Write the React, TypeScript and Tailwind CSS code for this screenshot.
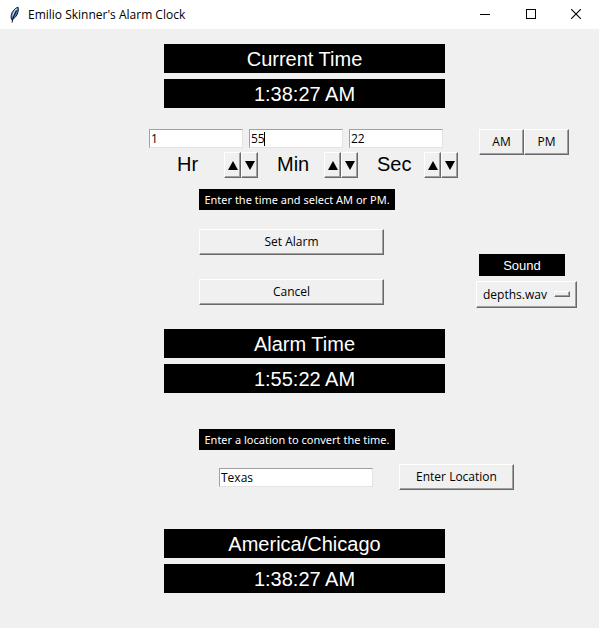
import { useState, type ReactNode } from "react";

const raised =
  "border border-t-white border-l-white border-b-[#696969] border-r-[#696969] shadow-[inset_-1px_-1px_0_#a0a0a0] bg-[#f0f0f0] active:bg-[#e4e4e4]";
const sunken =
  "border border-t-[#a0a0a0] border-l-[#a0a0a0] border-b-[#e3e3e3] border-r-[#e3e3e3] bg-white h-[19px] px-px text-[12px] leading-4 text-black outline-none";

function Feather() {
  return (
    <svg width="16" height="18" viewBox="0 0 16 18" aria-hidden="true">
      <path d="M11 1.200C8 2 4.800 5.600 4.200 9.400c-.2 1.800-.1 3 .5 4.300 2.900-1.200 5.200-3.900 6-6.700.7-2.200 1-4.400.3-5.800z" fill="#4b7db5" stroke="#14202e" strokeWidth="1" />
      <path d="M9.800 2.800C7.800 4.500 6.200 7.300 5.700 10.500" fill="none" stroke="#b9d6f2" strokeWidth="1.200" />
      <path d="M9.500 4.500C7.200 8.300 5.600 12 5 16.500" fill="none" stroke="#0b121b" strokeWidth="1.100" />
    </svg>
  );
}

function TitleBar() {
  return (
    <header className="flex h-[29px] items-center bg-white pl-[7px]">
      <div className="flex w-[21px]">
        <Feather />
      </div>
      <h1 className="flex-1 text-[12px] leading-4">Emilio Skinner's Alarm Clock</h1>
      <div className="flex h-[27px] self-start">
        <button aria-label="Minimize" className="flex w-[46px] items-center justify-center">
          <svg width="10" height="10" viewBox="0 0 10 10" shapeRendering="crispEdges">
            <path d="M0 5.500h10" stroke="#000" />
          </svg>
        </button>
        <button aria-label="Maximize" className="flex w-[45px] items-center justify-center">
          <svg width="10" height="10" viewBox="0 0 10 10" shapeRendering="crispEdges">
            <path d="M.5.5h9v9h-9z" stroke="#000" fill="none" />
          </svg>
        </button>
        <button aria-label="Close" className="flex w-[46px] items-center justify-center">
          <svg width="10" height="10" viewBox="0 0 10 10">
            <path d="M0 0l10 10M10 0L0 10" stroke="#000" strokeWidth="1.100" />
          </svg>
        </button>
      </div>
    </header>
  );
}

function Banner({ title, time }: { title: string; time: string }) {
  return (
    <section className="ml-[15px] flex w-[281px] flex-col gap-1.5 text-center font-['Liberation_Sans',Arial,sans-serif] text-[20px] leading-7 text-white">
      <h2 className="bg-black pt-px">{title}</h2>
      <p className="bg-black pt-px">{time}</p>
    </section>
  );
}

function Hint({ children }: { children: ReactNode }) {
  return (
    <p className="w-[196px] bg-black text-center font-['Noto_Sans',sans-serif] text-[11px] leading-[21px] whitespace-nowrap text-white">
      {children}
    </p>
  );
}

function Arrow({ down = false }: { down?: boolean }) {
  return (
    <svg width="10" height="9" viewBox="0 0 10 9" aria-hidden="true">
      <path d={down ? "M0 0h10L5 9z" : "M5 0l5 9H0z"} fill="#000" />
    </svg>
  );
}

const units = [
  { id: "hr", label: "Hr", initial: 1, limit: 13 },
  { id: "min", label: "Min", initial: 55, limit: 60 },
  { id: "sec", label: "Sec", initial: 22, limit: 60 },
];

function TimeFields() {
  const [values, setValues] = useState(units.map((u) => String(u.initial)));
  const update = (i: number, v: string) =>
    setValues((old) => old.map((o, n) => (n === i ? v : o)));
  const step = (i: number, by: number) => {
    const limit = units[i].limit;
    update(i, String((Number(values[i]) + by + limit) % limit));
  };

  return (
    <div className="w-[309px]">
      <div className="flex gap-1.5">
        {units.map((u, i) => (
          <div key={u.id} className="relative flex w-[94px]">
            <input
              id={u.id}
              className={`${sunken} w-full`}
              value={values[i]}
              onChange={(e) => update(i, e.target.value)}
            />
            {u.id === "min" && (
              <span className="pointer-events-none absolute top-[3px] left-[15px] h-[14px] w-px bg-black" />
            )}
          </div>
        ))}
      </div>
      <div className="mt-1 flex justify-between pl-7">
        {units.map((u, i) => (
          <div key={u.id} className="flex w-[81px] items-start justify-between">
            <label htmlFor={u.id} className="font-['Liberation_Sans',Arial,sans-serif] text-[20px] leading-6">
              {u.label}
            </label>
            <div className="flex">
              <button aria-label={`${u.label} up`} onClick={() => step(i, 1)} className={`${raised} flex h-[26px] w-[17px] items-center justify-center`}>
                <Arrow />
              </button>
              <button aria-label={`${u.label} down`} onClick={() => step(i, -1)} className={`${raised} flex h-[26px] w-[17px] items-center justify-center`}>
                <Arrow down />
              </button>
            </div>
          </div>
        ))}
      </div>
    </div>
  );
}

function SoundPicker() {
  return (
    <div className="mt-[25px] w-[101px]">
      <label
        htmlFor="sound"
        className="ml-[3px] block w-[86px] bg-black pt-px text-center font-['Liberation_Sans',Arial,sans-serif] text-[13px] leading-[21px] text-white"
      >
        Sound
      </label>
      <div className="relative mt-[5px]">
        <select id="sound" defaultValue="depths.wav" className={`${raised} block h-[27px] w-full appearance-none rounded-none pl-1.5 text-[12px] leading-4`}>
          <option>depths.wav</option>
        </select>
        <span className={`${raised} pointer-events-none absolute top-2.5 right-[7px] h-1.5 w-4`} />
      </div>
    </div>
  );
}

export default function App() {
  return (
    <div className="min-h-screen bg-[#f0f0f0] font-['Open_Sans','Noto_Sans',sans-serif] text-black">
      <TitleBar />
      <main className="pt-[15px] pr-[22px] pb-[35px] pl-[149px]">
        <Banner title="Current Time" time="1:38:27 AM" />

        <div className="mt-[21px] flex items-start justify-between pr-2">
          <TimeFields />
          <div className="flex text-[12px] leading-4">
            <button className={`${raised} h-[26px] w-[45px]`}>AM</button>
            <button className={`${raised} h-[26px] w-[45px]`}>PM</button>
          </div>
        </div>

        <div className="mt-[11px] pl-[50px]">
          <Hint>Enter the time and select AM or PM.</Hint>
        </div>

        <div className="mt-[19px] flex items-start justify-between pl-[50px]">
          <div className="flex w-[185px] flex-col gap-6 text-[12px] leading-4">
            <button className={`${raised} h-[26px]`}>Set Alarm</button>
            <button className={`${raised} h-[26px]`}>Cancel</button>
          </div>
          <SoundPicker />
        </div>

        <div className="mt-[21px]">
          <Banner title="Alarm Time" time="1:55:22 AM" />
        </div>

        <div className="mt-9 pl-[50px]">
          <Hint>Enter a location to convert the time.</Hint>
        </div>

        <form className="mt-3.5 flex items-center gap-[26px] pl-[70px]" onSubmit={(e) => e.preventDefault()}>
          <input aria-label="Location" defaultValue="Texas" className={`${sunken} w-[154px]`} />
          <button className={`${raised} h-[26px] w-[115px] text-[12px] leading-4`}>Enter Location</button>
        </form>

        <div className="mt-[39px]">
          <Banner title="America/Chicago" time="1:38:27 AM" />
        </div>
      </main>
    </div>
  );
}
